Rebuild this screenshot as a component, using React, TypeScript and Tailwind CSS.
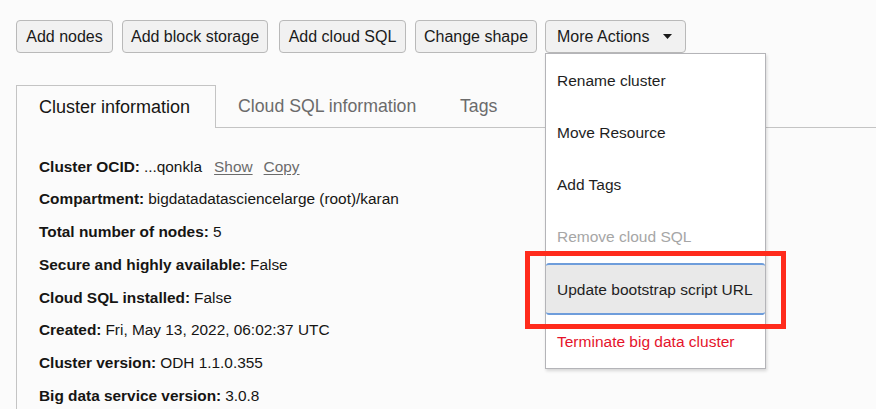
import { ReactNode } from "react";

const font = { fontFamily: '"Liberation Sans", Arial, sans-serif' };

function ActionButton({ children, className = "" }: { children: ReactNode; className?: string }) {
  return (
    <button
      className={`flex h-[33px] items-center justify-center rounded-[4px] border border-[#b9b9b9] bg-[#f1f1f1] text-[16px] leading-none text-[#1a1a1a] ${className}`}
    >
      {children}
    </button>
  );
}

function Row({ label, children }: { label: string; children: ReactNode }) {
  return (
    <div className="flex h-[32.7px] items-center text-[15.4px] text-[#161513]">
      <span className="font-bold">{label}</span>
      <span className="ml-[4px]">{children}</span>
    </div>
  );
}

function MenuItem({ children, className = "" }: { children: ReactNode; className?: string }) {
  return (
    <div className={`flex h-[52.3px] items-center whitespace-nowrap px-[11px] text-[15.5px] ${className}`}>
      {children}
    </div>
  );
}

export default function App() {
  return (
    <div className="relative h-[409px] w-[876px] overflow-hidden bg-[#fbfbfb]" style={font}>
      {/* Action bar */}
      <div className="flex pl-[16px] pt-[20px]">
        <ActionButton className="w-[97px]">Add nodes</ActionButton>
        <ActionButton className="ml-[9px] w-[146px]">Add block storage</ActionButton>
        <ActionButton className="ml-[11px] w-[127px]">Add cloud SQL</ActionButton>
        <ActionButton className="ml-[9px] w-[122px]">Change shape</ActionButton>
        <div className="relative ml-[8px]">
          <button className="flex h-[33px] w-[141px] items-center rounded-[4px] border border-[#b9b9b9] bg-[#f1f1f1] pl-[11px] text-[16px] leading-none text-[#1a1a1a]">
            More Actions
            <svg width="9" height="5" viewBox="0 0 9 5" className="ml-[14px]">
              <path d="M0 0h9L4.5 5z" fill="#1a1a1a" />
            </svg>
          </button>

          {/* Dropdown menu */}
          <div className="absolute left-0 top-[33px] z-10 w-[221px] border border-[#b4b4b8] bg-white shadow-[1px_2px_3px_rgba(0,0,0,0.15)]">
            <MenuItem className="text-[#1e1e1e]">Rename cluster</MenuItem>
            <MenuItem className="text-[#1e1e1e]">Move Resource</MenuItem>
            <MenuItem className="text-[#1e1e1e]">Add Tags</MenuItem>
            <MenuItem className="text-[#a6a6a6]">Remove cloud SQL</MenuItem>
            <MenuItem className="rounded-[3px] border-y-2 border-[#6e9ddb] bg-[#e9e9e9] text-[#1e1e1e]">
              Update bootstrap script URL
            </MenuItem>
            <MenuItem className="text-[#e5132b]">Terminate big data cluster</MenuItem>
          </div>
        </div>
      </div>

      {/* Tabs */}
      <div className="mt-[32px] flex pl-[16px]">
        <div className="flex h-[43px] w-[200px] items-center border-x border-t border-[#c4c4c4] bg-[#fbfbfb] pl-[22px] text-[18px] text-[#161513]">
          Cluster information
        </div>
        <div className="flex flex-1 border-b border-[#c4c4c4] text-[17.7px] text-[#6b6b6b]">
          <div className="flex w-[244px] items-center pl-[22px]">Cloud SQL information</div>
          <div className="flex items-center">Tags</div>
        </div>
      </div>

      {/* Cluster info */}
      <div className="ml-[16px] border-l border-[#c4c4c4] pl-[22px] pt-[22px]">
        <Row label="Cluster OCID:">
          ...qonkla
          <a className="ml-[12px] text-[#6b6b6b] underline underline-offset-2">Show</a>
          <a className="ml-[11px] text-[#6b6b6b] underline underline-offset-2">Copy</a>
        </Row>
        <Row label="Compartment:">bigdatadatasciencelarge (root)/karan</Row>
        <Row label="Total number of nodes:">5</Row>
        <Row label="Secure and highly available:">False</Row>
        <Row label="Cloud SQL installed:">False</Row>
        <Row label="Created:">Fri, May 13, 2022, 06:02:37 UTC</Row>
        <Row label="Cluster version:">ODH 1.1.0.355</Row>
        <Row label="Big data service version:">3.0.8</Row>
      </div>

      {/* Highlight annotation */}
      <div className="absolute left-[525px] top-[251px] z-20 h-[78px] w-[261px] border-[5px] border-[#ff2b1c]" />
    </div>
  );
}
